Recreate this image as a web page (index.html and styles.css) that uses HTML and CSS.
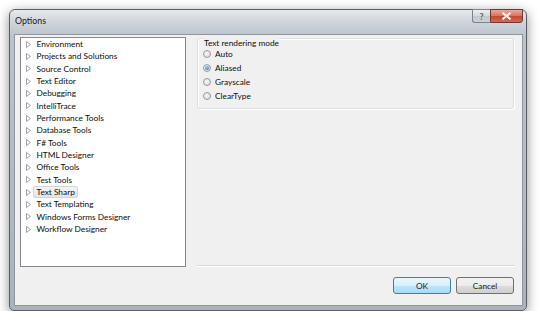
FILE: index.html
```html
<!DOCTYPE html>
<html>
<head>
<meta charset="utf-8">
<link rel="stylesheet" href="styles.css">
</head>
<body>
<div class="window">
  <div class="titlebar">
    <span class="title">Options</span>
    <div class="caption">
      <span class="cap-btn help">?</span>
      <span class="cap-btn close"><svg width="11" height="8" viewBox="0 0 11 8"><path d="M1.5 0.8 L9.5 7.2 M9.5 0.8 L1.5 7.2" stroke="#fff" stroke-width="2" fill="none"/></svg></span>
    </div>
  </div>
  <div class="client">
    <ul class="tree">
      <li class="item"><svg class="arrow" width="5" height="7" viewBox="0 0 5 7"><path d="M0.5 0.5 L4.5 3.5 L0.5 6.5 Z" fill="#fff" stroke="#a4a4a4" stroke-width="1"/></svg><span class="label">Environment</span></li>
      <li class="item"><svg class="arrow" width="5" height="7" viewBox="0 0 5 7"><path d="M0.5 0.5 L4.5 3.5 L0.5 6.5 Z" fill="#fff" stroke="#a4a4a4" stroke-width="1"/></svg><span class="label">Projects and Solutions</span></li>
      <li class="item"><svg class="arrow" width="5" height="7" viewBox="0 0 5 7"><path d="M0.5 0.5 L4.5 3.5 L0.5 6.5 Z" fill="#fff" stroke="#a4a4a4" stroke-width="1"/></svg><span class="label">Source Control</span></li>
      <li class="item"><svg class="arrow" width="5" height="7" viewBox="0 0 5 7"><path d="M0.5 0.5 L4.5 3.5 L0.5 6.5 Z" fill="#fff" stroke="#a4a4a4" stroke-width="1"/></svg><span class="label">Text Editor</span></li>
      <li class="item"><svg class="arrow" width="5" height="7" viewBox="0 0 5 7"><path d="M0.5 0.5 L4.5 3.5 L0.5 6.5 Z" fill="#fff" stroke="#a4a4a4" stroke-width="1"/></svg><span class="label">Debugging</span></li>
      <li class="item"><svg class="arrow" width="5" height="7" viewBox="0 0 5 7"><path d="M0.5 0.5 L4.5 3.5 L0.5 6.5 Z" fill="#fff" stroke="#a4a4a4" stroke-width="1"/></svg><span class="label">IntelliTrace</span></li>
      <li class="item"><svg class="arrow" width="5" height="7" viewBox="0 0 5 7"><path d="M0.5 0.5 L4.5 3.5 L0.5 6.5 Z" fill="#fff" stroke="#a4a4a4" stroke-width="1"/></svg><span class="label">Performance Tools</span></li>
      <li class="item"><svg class="arrow" width="5" height="7" viewBox="0 0 5 7"><path d="M0.5 0.5 L4.5 3.5 L0.5 6.5 Z" fill="#fff" stroke="#a4a4a4" stroke-width="1"/></svg><span class="label">Database Tools</span></li>
      <li class="item"><svg class="arrow" width="5" height="7" viewBox="0 0 5 7"><path d="M0.5 0.5 L4.5 3.5 L0.5 6.5 Z" fill="#fff" stroke="#a4a4a4" stroke-width="1"/></svg><span class="label">F# Tools</span></li>
      <li class="item"><svg class="arrow" width="5" height="7" viewBox="0 0 5 7"><path d="M0.5 0.5 L4.5 3.5 L0.5 6.5 Z" fill="#fff" stroke="#a4a4a4" stroke-width="1"/></svg><span class="label">HTML Designer</span></li>
      <li class="item"><svg class="arrow" width="5" height="7" viewBox="0 0 5 7"><path d="M0.5 0.5 L4.5 3.5 L0.5 6.5 Z" fill="#fff" stroke="#a4a4a4" stroke-width="1"/></svg><span class="label">Office Tools</span></li>
      <li class="item"><svg class="arrow" width="5" height="7" viewBox="0 0 5 7"><path d="M0.5 0.5 L4.5 3.5 L0.5 6.5 Z" fill="#fff" stroke="#a4a4a4" stroke-width="1"/></svg><span class="label">Test Tools</span></li>
      <li class="item"><svg class="arrow" width="5" height="7" viewBox="0 0 5 7"><path d="M0.5 0.5 L4.5 3.5 L0.5 6.5 Z" fill="#fff" stroke="#a4a4a4" stroke-width="1"/></svg><span class="label selected">Text Sharp</span></li>
      <li class="item"><svg class="arrow" width="5" height="7" viewBox="0 0 5 7"><path d="M0.5 0.5 L4.5 3.5 L0.5 6.5 Z" fill="#fff" stroke="#a4a4a4" stroke-width="1"/></svg><span class="label">Text Templating</span></li>
      <li class="item"><svg class="arrow" width="5" height="7" viewBox="0 0 5 7"><path d="M0.5 0.5 L4.5 3.5 L0.5 6.5 Z" fill="#fff" stroke="#a4a4a4" stroke-width="1"/></svg><span class="label">Windows Forms Designer</span></li>
      <li class="item"><svg class="arrow" width="5" height="7" viewBox="0 0 5 7"><path d="M0.5 0.5 L4.5 3.5 L0.5 6.5 Z" fill="#fff" stroke="#a4a4a4" stroke-width="1"/></svg><span class="label">Workflow Designer</span></li>
    </ul>
    <div class="pane">
      <div class="group">
        <div class="group-label">Text rendering mode</div>
        <div class="radio"><span class="dot"></span><span>Auto</span></div>
        <div class="radio"><span class="dot checked"></span><span>Aliased</span></div>
        <div class="radio"><span class="dot"></span><span>Grayscale</span></div>
        <div class="radio"><span class="dot"></span><span>ClearType</span></div>
      </div>
      <div class="sep"></div>
    </div>
    <div class="buttons">
      <span class="button default">OK</span>
      <span class="button">Cancel</span>
    </div>
  </div>
</div>
</body>
</html>
```
FILE: styles.css
```css
html, body {
  margin: 0;
  background: #ffffff;
}
body {
  font-family: Lato, "Open Sans", sans-serif;
  font-size: 8.3px;
  color: #0e0e0e;
}
.window {
  margin: 9px 0 0 9px;
  width: 518px;
  height: 302px;
  box-sizing: border-box;
  border: 1px solid #5a5f66;
  border-radius: 6px 6px 5px 5px;
  background: linear-gradient(#e6e9ec, #d0d5db 12px, #bcc3cb 26px, #aab2bb);
  padding: 0 3px 4px 4px;
  box-shadow: 0 3px 12px rgba(0, 0, 0, 0.45);
  display: flex;
  flex-direction: column;
}
.titlebar {
  height: 24px;
  flex: none;
  display: flex;
  justify-content: space-between;
  align-items: flex-start;
}
.title {
  margin-top: 5px;
  padding-left: 1px;
  line-height: 11px;
  font-size: 8.8px;
  color: #1a1a1a;
}
.caption {
  display: flex;
  margin-top: -1px;
}
.cap-btn {
  height: 14px;
  box-sizing: border-box;
  display: flex;
  align-items: center;
  justify-content: center;
}
.help {
  width: 18px;
  border: 1px solid #7b8289;
  border-right: none;
  border-radius: 0 0 0 3px;
  background: linear-gradient(#eef0f2, #d3d8dd 50%, #c2c8ce 51%, #cdd2d7);
  color: #5d646b;
  font-size: 9px;
  font-weight: bold;
}
.close {
  width: 33px;
  border: 1px solid #6d3a33;
  border-radius: 0 0 3px 0;
  background: linear-gradient(#e9a99b, #d7735f 50%, #c4462f 51%, #d26b4f);
}
.client {
  flex: 1;
  border: 1px solid #8f969e;
  background: #f0f0f0;
  display: grid;
  grid-template-columns: 166px 1fr;
  grid-template-rows: 1fr auto;
  column-gap: 11px;
  row-gap: 10px;
  padding: 2px 8px 11px 5px;
}
.tree {
  grid-row: 1;
  grid-column: 1;
  margin: 0;
  list-style: none;
  background: #ffffff;
  border: 1px solid #828790;
  padding: 0;
}
.item {
  height: 12.33px;
  display: flex;
  align-items: center;
  padding-left: 5px;
}
.arrow {
  flex: none;
  margin-right: 2px;
}
.label {
  padding: 0 2.5px;
  line-height: 10px;
  border: 1px solid transparent;
  border-radius: 2px;
}
.label.selected {
  background: linear-gradient(#f5f5f5, #e4e4e4);
  border-color: #d6d6d6;
}
.pane {
  grid-row: 1;
  grid-column: 2;
  display: flex;
  flex-direction: column;
}
.group {
  margin-top: 1px;
  height: 71px;
  box-sizing: border-box;
  border: 1px solid #dcdfe2;
  box-shadow: inset 1px 1px 0 #ffffff, 1px 1px 0 #ffffff;
  border-radius: 3px;
  padding: 0 0 0 5px;
}
.group-label {
  margin-top: -1px;
  margin-bottom: -1.5px;
  line-height: 11px;
  padding-left: 1px;
  background: #f0f0f0;
  width: max-content;
}
.radio {
  height: 13.8px;
  display: flex;
  align-items: center;
  gap: 4px;
}
.dot {
  width: 8px;
  height: 8px;
  box-sizing: border-box;
  border-radius: 50%;
  border: 1px solid #9a9a9a;
  background: radial-gradient(circle at 40% 40%, #f6f6f6, #d8d8d8);
  display: flex;
  align-items: center;
  justify-content: center;
}
.dot.checked::after {
  content: "";
  width: 4px;
  height: 4px;
  border-radius: 50%;
  background: radial-gradient(circle at 40% 35%, #8fd0f2, #1c6ea8);
}
.sep {
  margin-top: auto;
  height: 1px;
  background: #d5d8db;
  border-bottom: 1px solid #ffffff;
}
.buttons {
  grid-row: 2;
  grid-column: 2;
  display: flex;
  justify-content: flex-end;
  gap: 5px;
}
.button {
  width: 58px;
  height: 17px;
  box-sizing: border-box;
  border: 1px solid #707070;
  border-radius: 3px;
  background: linear-gradient(#f2f2f2, #ebebeb 50%, #dddddd 51%, #cfcfcf);
  display: flex;
  align-items: center;
  justify-content: center;
  color: #1b1b1b;
}
.button.default {
  border-color: #3c7fb1;
  background: linear-gradient(#eaf6fd, #d9f0fc 50%, #bee6fd 51%, #a7d9f5);
}
```
